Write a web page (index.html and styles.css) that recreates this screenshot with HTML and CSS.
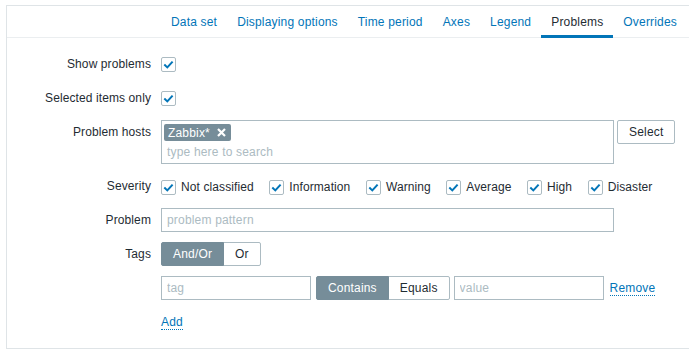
FILE: index.html
```html
<!DOCTYPE html>
<html lang="en">
<head>
  <meta charset="UTF-8">
  <meta name="viewport" content="width=device-width, initial-scale=1.0">
  <title>Graph widget - Problems</title>
  <link rel="stylesheet" href="styles.css">
</head>
<body>
  <div class="widget-form">
    <ul class="tabs">
      <li><a href="#">Data set</a></li>
      <li><a href="#">Displaying options</a></li>
      <li><a href="#">Time period</a></li>
      <li><a href="#">Axes</a></li>
      <li><a href="#">Legend</a></li>
      <li class="active"><a href="#">Problems</a></li>
      <li><a href="#">Overrides</a></li>
    </ul>

    <div class="form-grid">
      <label class="form-label">Show problems</label>
      <div class="form-field">
        <span class="checkbox"><svg viewBox="0 0 13 13"><path d="M2.3 6.6 L5.3 9.4 L10.6 3.6"/></svg></span>
      </div>

      <label class="form-label">Selected items only</label>
      <div class="form-field">
        <span class="checkbox"><svg viewBox="0 0 13 13"><path d="M2.3 6.6 L5.3 9.4 L10.6 3.6"/></svg></span>
      </div>

      <label class="form-label">Problem hosts</label>
      <div class="form-field top">
        <div class="multiselect">
          <span class="ms-chip">Zabbix*
            <svg class="chip-remove" viewBox="0 0 9 9"><path d="M1 1 L8 8 M8 1 L1 8"/></svg>
          </span>
          <div class="ms-input">type here to search</div>
        </div>
        <button class="btn-alt">Select</button>
      </div>

      <label class="form-label">Severity</label>
      <div class="form-field">
        <ul class="check-list">
          <li><span class="checkbox"><svg viewBox="0 0 13 13"><path d="M2.3 6.6 L5.3 9.4 L10.6 3.6"/></svg></span>Not classified</li>
          <li><span class="checkbox"><svg viewBox="0 0 13 13"><path d="M2.3 6.6 L5.3 9.4 L10.6 3.6"/></svg></span>Information</li>
          <li><span class="checkbox"><svg viewBox="0 0 13 13"><path d="M2.3 6.6 L5.3 9.4 L10.6 3.6"/></svg></span>Warning</li>
          <li><span class="checkbox"><svg viewBox="0 0 13 13"><path d="M2.3 6.6 L5.3 9.4 L10.6 3.6"/></svg></span>Average</li>
          <li><span class="checkbox"><svg viewBox="0 0 13 13"><path d="M2.3 6.6 L5.3 9.4 L10.6 3.6"/></svg></span>High</li>
          <li><span class="checkbox"><svg viewBox="0 0 13 13"><path d="M2.3 6.6 L5.3 9.4 L10.6 3.6"/></svg></span>Disaster</li>
        </ul>
      </div>

      <label class="form-label">Problem</label>
      <div class="form-field">
        <input class="text-input wide" type="text" placeholder="problem pattern">
      </div>

      <label class="form-label">Tags</label>
      <div class="form-field">
        <div class="radio-list">
          <span class="selected">And/Or</span>
          <span>Or</span>
        </div>
      </div>

      <div></div>
      <div class="form-field tag-row">
        <input class="text-input tag" type="text" placeholder="tag">
        <div class="radio-list">
          <span class="selected">Contains</span>
          <span>Equals</span>
        </div>
        <input class="text-input tag value" type="text" placeholder="value">
        <a class="link-action remove" href="#">Remove</a>
      </div>

      <div></div>
      <div class="form-field">
        <a class="link-action" href="#">Add</a>
      </div>
    </div>
  </div>
</body>
</html>
```

FILE: styles.css
```css
* {
  margin: 0;
  padding: 0;
  box-sizing: border-box;
}

body {
  font-family: "Liberation Sans", Arial, sans-serif;
  font-size: 12px;
  letter-spacing: 0.18px;
  color: #1f2c33;
  background: #ffffff;
}

.widget-form {
  margin: 5px 0 0 6px;
  height: 344px;
  border: 1px solid #dfe4e7;
  border-right: none;
}

/* tabs */
.tabs {
  display: flex;
  list-style: none;
  height: 32px;
  padding-left: 154px;
  border-bottom: 1px solid #ebeef0;
}

.tabs a {
  display: block;
  height: 32px;
  padding: 0 10px;
  line-height: 32px;
  color: #0275b8;
  text-decoration: none;
}

.tabs .active a {
  color: #1f2c33;
  border-bottom: 3px solid #0275b8;
}

/* form */
.form-grid {
  display: grid;
  grid-template-columns: 144px 1fr;
  column-gap: 10px;
  row-gap: 10px;
  padding-top: 14px;
}

.form-label {
  text-align: right;
  line-height: 24px;
  letter-spacing: 0.1px;
}

.form-field {
  display: flex;
  align-items: center;
  min-height: 24px;
}

.form-field.top {
  align-items: flex-start;
}

.checkbox {
  display: flex;
  align-items: center;
  justify-content: center;
  width: 15px;
  height: 15px;
  border: 1px solid #acbbc2;
  border-radius: 2px;
  background: #ffffff;
  flex-shrink: 0;
}

.checkbox svg {
  width: 13px;
  height: 13px;
  fill: none;
  stroke: #0275b8;
  stroke-width: 2;
}

.check-list {
  display: flex;
  list-style: none;
  gap: 15.5px;
  padding-top: 2px;
  letter-spacing: 0.1px;
}

.check-list li {
  display: flex;
  align-items: center;
  gap: 5px;
  line-height: 16px;
}

/* multiselect */
.multiselect {
  width: 453px;
  height: 44px;
  border: 1px solid #acbbc2;
  background: #ffffff;
}

.ms-chip {
  display: inline-flex;
  align-items: center;
  height: 17px;
  margin: 3px 0 0 2px;
  padding: 0 5px 0 4px;
  background: #768d99;
  color: #ffffff;
  border-radius: 2px;
  line-height: 18px;
}

.chip-remove {
  width: 9px;
  height: 9px;
  margin-left: 7px;
  fill: none;
  stroke: #ffffff;
  stroke-width: 2.2;
}

.ms-input {
  height: 18px;
  margin-top: 2px;
  padding-left: 5px;
  line-height: 18px;
  color: #acbbc2;
}

.btn-alt {
  height: 24px;
  margin-left: 3px;
  padding: 0 11px;
  font-family: inherit;
  font-size: 12px;
  letter-spacing: inherit;
  line-height: 22px;
  color: #1f2c33;
  background: #ffffff;
  border: 1px solid #acbbc2;
  border-radius: 2px;
}

/* inputs */
.text-input {
  height: 24px;
  padding: 0 5px;
  font-family: inherit;
  font-size: 12px;
  letter-spacing: inherit;
  color: #1f2c33;
  border: 1px solid #acbbc2;
  background: #ffffff;
  outline: none;
}

.text-input::placeholder {
  color: #acbbc2;
  opacity: 1;
}

.text-input.wide {
  width: 453px;
}

.text-input.tag {
  width: 150px;
  margin-right: 5px;
}

.text-input.value {
  margin: 0 0 0 4px;
}

.radio-list {
  display: flex;
}

.radio-list span {
  height: 24px;
  padding: 0 11px;
  line-height: 22px;
  border: 1px solid #acbbc2;
  background: #ffffff;
}

.radio-list span + span {
  margin-left: -1px;
}

.radio-list span:first-child {
  border-radius: 2px 0 0 2px;
}

.radio-list span:last-child {
  border-radius: 0 2px 2px 0;
}

.radio-list .selected {
  background: #768d99;
  border-color: #768d99;
  color: #ffffff;
  position: relative;
}

.link-action {
  color: #0275b8;
  text-decoration: none;
  border-bottom: 1px dotted #0275b8;
  line-height: 14px;
}

.link-action.remove {
  margin-left: 6px;
}
```
